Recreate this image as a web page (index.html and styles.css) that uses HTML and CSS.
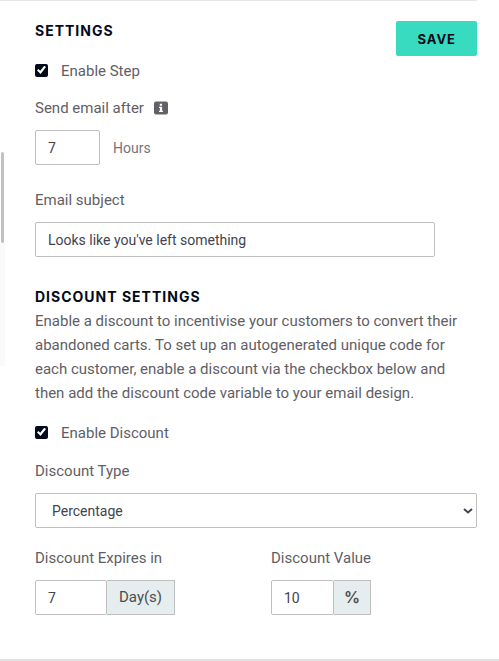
FILE: index.html
```
<!DOCTYPE html>
<html lang="en">
<head>
    <meta charset="UTF-8">
    <meta name="viewport" content="width=device-width, initial-scale=1.0">
    <title>Email Step Settings</title>
    <link rel="stylesheet" href="styles.css">
</head>
<body>
    <div class="page">
        <div class="scrollbar">
            <div class="scrollbar-thumb"></div>
            <div class="scrollbar-track"></div>
        </div>

        <form class="panel">
            <header class="panel-header">
                <h2>Settings</h2>
                <button type="button" class="save">Save</button>
            </header>

            <div class="check step-check">
                <input type="checkbox" id="enableStep" checked>
                <label for="enableStep">Enable Step</label>
            </div>

            <div class="field">
                <div class="label-row">
                    <label for="delay">Send email after</label>
                    <svg class="info" viewBox="0 0 14 14" width="14" height="14" aria-hidden="true">
                        <rect width="14" height="13" y="0.500" rx="2" fill="#626168"/>
                        <path d="M5.8 2.800h2.300v2H5.800zM5 5.800h3.100v3.900H9v1.300H5V9.700h.9V7.100H5z" fill="#fff"/>
                    </svg>
                </div>
                <div class="input-row">
                    <input type="text" id="delay" class="input delay" value="7">
                    <span class="unit">Hours</span>
                </div>
            </div>

            <div class="field subject-field">
                <label for="subject">Email subject</label>
                <input type="text" id="subject" class="input subject" value="Looks like you've left something">
            </div>

            <section class="discount">
                <h2>Discount Settings</h2>
                <p>Enable a discount to incentivise your customers to convert their abandoned carts. To set up an autogenerated unique code for each customer, enable a discount via the checkbox below and then add the discount code variable to your email design.</p>

                <div class="check">
                    <input type="checkbox" id="enableDiscount" checked>
                    <label for="enableDiscount">Enable Discount</label>
                </div>

                <div class="field">
                    <label for="discountType">Discount Type</label>
                    <div class="select-wrap">
                        <select id="discountType" class="input">
                            <option>Percentage</option>
                            <option>Fixed Amount</option>
                        </select>
                        <svg class="arrow" viewBox="0 0 10 6" width="10" height="6" aria-hidden="true">
                            <path d="M1 1l4 3.500L9 1" fill="none" stroke="#41444f" stroke-width="2"/>
                        </svg>
                    </div>
                </div>

                <div class="columns">
                    <div class="field">
                        <label for="expires">Discount Expires in</label>
                        <div class="group">
                            <input type="text" id="expires" class="input expires" value="7">
                            <span class="addon">Day(s)</span>
                        </div>
                    </div>
                    <div class="field">
                        <label for="value">Discount Value</label>
                        <div class="group">
                            <input type="text" id="value" class="input value" value="10">
                            <span class="addon percent">%</span>
                        </div>
                    </div>
                </div>
            </section>
        </form>
    </div>
</body>
</html>
```
FILE: styles.css
```
* {
    box-sizing: border-box;
}
body {
    margin: 0;
    background: #fff;
    color: #5f5e66;
    font-family: Roboto, Arial, sans-serif;
    font-size: 15px;
    line-height: 24px;
}
h2, p {
    margin: 0;
}
h2 {
    color: #020b19;
    font-family: Inter, Arial, sans-serif;
    font-size: 14px;
    font-weight: 700;
    line-height: 20px;
    letter-spacing: 1px;
    text-transform: uppercase;
}
.page {
    display: flex;
    border-bottom: 2px solid #e2e2e2;
}

/* scrollbar of the step list on the left */
.scrollbar {
    display: flex;
    flex-direction: column;
    width: 5px;
    padding-top: 152px;
}
.scrollbar-thumb {
    width: 3px;
    height: 91px;
    margin-left: 1px;
    border-radius: 2px;
    background: #c1c1c1;
}
.scrollbar-track {
    height: 123px;
    background: #fafafa;
}

.panel {
    flex: 1;
    margin-right: 22px;
    padding: 0 0 44px 30px;
}
.panel::before {
    content: "";
    display: block;
    height: 1px;
    margin: 0 0 20px -35px;
    background: #e6e6e6;
}
.panel-header {
    display: flex;
    justify-content: space-between;
    align-items: flex-start;
}
.save {
    height: 35px;
    padding: 0 21px;
    border: 0;
    border-radius: 2px;
    background: #38dbbf;
    color: #020b19;
    font-family: Inter, Arial, sans-serif;
    font-size: 13px;
    font-weight: 700;
    letter-spacing: 1px;
    text-transform: uppercase;
    cursor: pointer;
}

.check {
    display: flex;
    align-items: center;
    gap: 13px;
    margin: 16px 0 14px;
}
.step-check {
    margin: 3px 0 13px;
}
.check input {
    appearance: none;
    display: grid;
    place-items: center;
    width: 13px;
    height: 13px;
    margin: 0 0 2px;
    border-radius: 2px;
    background: #020b19;
}
.check input:checked::before {
    content: "";
    width: 9px;
    height: 9px;
    background: #fff;
    clip-path: polygon(0 55%, 16% 38%, 36% 58%, 80% 2%, 100% 18%, 40% 94%);
}

.field {
    display: flex;
    flex-direction: column;
    gap: 10px;
}
.label-row {
    display: flex;
    align-items: center;
    gap: 10px;
}
.subject-field {
    margin-top: 23px;
}
.input {
    height: 35px;
    padding: 0 12px;
    border: 1px solid #bfbfbf;
    border-radius: 2px;
    background: #fff;
    color: #41444f;
    font-family: inherit;
    font-size: 14px;
}
.input-row {
    display: flex;
    align-items: center;
    gap: 13px;
}
.unit {
    color: #74737a;
    font-size: 14px;
}
.delay {
    width: 65px;
}
.subject {
    width: 100%;
    max-width: 400px;
}

.discount {
    margin-top: 30px;
}
.discount p {
    margin-top: 2px;
}
.select-wrap {
    position: relative;
}
.select-wrap select {
    appearance: none;
    width: 100%;
    padding: 0 16px;
}
.arrow {
    position: absolute;
    top: 15px;
    right: 4px;
    pointer-events: none;
}
.columns {
    display: grid;
    grid-template-columns: 1fr 1fr;
    gap: 30px;
    margin-top: 18px;
}
.group {
    display: flex;
}
.expires {
    width: 72px;
}
.value {
    width: 63px;
}
.addon {
    padding: 0 12px;
    border: 1px solid #bfbfbf;
    border-left: 0;
    background: #e5edee;
    color: #4d4d4d;
    line-height: 33px;
    text-align: center;
}
.percent {
    width: 37px;
    padding: 0;
    font-family: Inter, Arial, sans-serif;
    font-size: 16px;
    font-weight: 600;
}
```
